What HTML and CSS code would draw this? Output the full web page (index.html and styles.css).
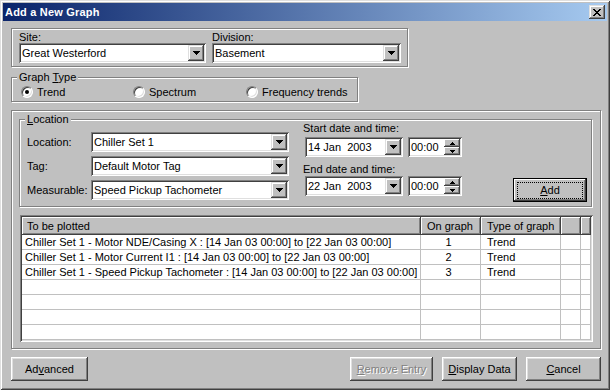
FILE: index.html
```html
<!DOCTYPE html>
<html lang="en">
  <head>
    <meta charset="utf-8" />
    <title>Add a New Graph</title>
    <link rel="stylesheet" href="styles.css">
  </head>

  <body>
    <div class="window">
      <div class="titlebar">
        <span class="title">Add a New Graph</span>
        <span class="close-btn">
          <svg width="8" height="7" viewBox="0 0 8 7"><path d="M0 0h2v1h-2zM6 0h2v1h-2zM1 1h2v1h-2zM5 1h2v1h-2zM2 2h4v1h-4zM3 3h2v1h-2zM2 4h4v1h-4zM1 5h2v1h-2zM5 5h2v1h-2zM0 6h2v1h-2zM6 6h2v1h-2z"/></svg>
        </span>
      </div>

      <div class="dialog">
        <div class="etched site-box">
          <div class="field">
            <span class="label">Site:</span>
            <div class="combo site-combo">
              <span class="combo-text">Great Westerford</span>
              <span class="drop"><svg width="7" height="4" viewBox="0 0 7 4"><path d="M0 0h7v1h-1v1h-1v1h-1v1h-1v-1h-1v-1h-1v-1h-1z"/></svg></span>
            </div>
          </div>
          <div class="field">
            <span class="label">Division:</span>
            <div class="combo division-combo">
              <span class="combo-text">Basement</span>
              <span class="drop"><svg width="7" height="4" viewBox="0 0 7 4"><path d="M0 0h7v1h-1v1h-1v1h-1v1h-1v-1h-1v-1h-1v-1h-1z"/></svg></span>
            </div>
          </div>
        </div>

        <fieldset class="group graph-type">
          <legend>Graph <u>T</u>ype</legend>
          <div class="radio-row">
            <label class="radio-item"><span class="radio checked"></span>Trend</label>
            <label class="radio-item"><span class="radio"></span>Spectrum</label>
            <label class="radio-item"><span class="radio"></span>Frequency trends</label>
          </div>
        </fieldset>

        <div class="etched main-box">
          <fieldset class="group location">
            <legend><u>L</u>ocation</legend>
            <div class="location-body">
              <div class="location-grid">
                <span class="label">Location:</span>
                <div class="combo">
                  <span class="combo-text">Chiller Set 1</span>
                  <span class="drop"><svg width="7" height="4" viewBox="0 0 7 4"><path d="M0 0h7v1h-1v1h-1v1h-1v1h-1v-1h-1v-1h-1v-1h-1z"/></svg></span>
                </div>
                <span class="label">Tag:</span>
                <div class="combo">
                  <span class="combo-text">Default Motor Tag</span>
                  <span class="drop"><svg width="7" height="4" viewBox="0 0 7 4"><path d="M0 0h7v1h-1v1h-1v1h-1v1h-1v-1h-1v-1h-1v-1h-1z"/></svg></span>
                </div>
                <span class="label">Measurable:</span>
                <div class="combo">
                  <span class="combo-text">Speed Pickup Tachometer</span>
                  <span class="drop"><svg width="7" height="4" viewBox="0 0 7 4"><path d="M0 0h7v1h-1v1h-1v1h-1v1h-1v-1h-1v-1h-1v-1h-1z"/></svg></span>
                </div>
              </div>

              <div class="dates">
                <span class="label">Start date and time:</span>
                <div class="date-row start-row">
                  <div class="combo date-combo">
                    <span class="combo-text">14 Jan&nbsp; 2003</span>
                    <span class="drop"><svg width="7" height="4" viewBox="0 0 7 4"><path d="M0 0h7v1h-1v1h-1v1h-1v1h-1v-1h-1v-1h-1v-1h-1z"/></svg></span>
                  </div>
                  <div class="time">
                    <span class="combo-text">00:00</span>
                    <span class="spin">
                      <span class="spin-btn"><svg width="5" height="3" viewBox="0 0 5 3"><path d="M2 0h1v1h1v1h1v1h-5v-1h1v-1h1z"/></svg></span>
                      <span class="spin-btn"><svg width="5" height="3" viewBox="0 0 5 3"><path d="M0 0h5v1h-1v1h-1v1h-1v-1h-1v-1h-1z"/></svg></span>
                    </span>
                  </div>
                </div>
                <span class="label end-label">End date and time:</span>
                <div class="date-row end-row">
                  <div class="combo date-combo">
                    <span class="combo-text">22 Jan&nbsp; 2003</span>
                    <span class="drop"><svg width="7" height="4" viewBox="0 0 7 4"><path d="M0 0h7v1h-1v1h-1v1h-1v1h-1v-1h-1v-1h-1v-1h-1z"/></svg></span>
                  </div>
                  <div class="time">
                    <span class="combo-text">00:00</span>
                    <span class="spin">
                      <span class="spin-btn"><svg width="5" height="3" viewBox="0 0 5 3"><path d="M2 0h1v1h1v1h1v1h-5v-1h1v-1h1z"/></svg></span>
                      <span class="spin-btn"><svg width="5" height="3" viewBox="0 0 5 3"><path d="M0 0h5v1h-1v1h-1v1h-1v-1h-1v-1h-1z"/></svg></span>
                    </span>
                  </div>
                </div>
              </div>

              <button class="btn default add-btn" type="button"><u>A</u>dd</button>
            </div>
          </fieldset>

          <div class="listview">
            <table>
              <colgroup>
                <col class="col-plot"><col class="col-graph"><col class="col-type"><col class="col-extra"><col>
              </colgroup>
              <thead>
                <tr><th>To be plotted</th><th class="pad">On graph</th><th class="pad">Type of graph</th><th></th><th></th></tr>
              </thead>
              <tbody>
                <tr><td>Chiller Set 1 - Motor NDE/Casing X : [14 Jan 03 00:00] to [22 Jan 03 00:00]</td><td class="num">1</td><td class="pad">Trend</td><td></td><td></td></tr>
                <tr><td>Chiller Set 1 - Motor Current I1 : [14 Jan 03 00:00] to [22 Jan 03 00:00]</td><td class="num">2</td><td class="pad">Trend</td><td></td><td></td></tr>
                <tr><td>Chiller Set 1 - Speed Pickup Tachometer : [14 Jan 03 00:00] to [22 Jan 03 00:00]</td><td class="num">3</td><td class="pad">Trend</td><td></td><td></td></tr>
                <tr><td></td><td></td><td></td><td></td><td></td></tr>
                <tr><td></td><td></td><td></td><td></td><td></td></tr>
                <tr><td></td><td></td><td></td><td></td><td></td></tr>
                <tr><td></td><td></td><td></td><td></td><td></td></tr>
              </tbody>
            </table>
          </div>
        </div>

        <div class="actions">
          <button class="btn advanced" type="button">Ad<u>v</u>anced</button>
          <div class="actions-right">
            <button class="btn disabled remove" type="button"><u>R</u>emove Entry</button>
            <button class="btn display" type="button"><u>D</u>isplay Data</button>
            <button class="btn cancel" type="button"><u>C</u>ancel</button>
          </div>
        </div>
      </div>
    </div>
  </body>
</html>
```

FILE: styles.css
```css
* {
  box-sizing: border-box;
}

body {
  margin: 0;
  background: #c0c0c0;
  font-family: "Liberation Sans", Arial, sans-serif;
  font-size: 11px;
  line-height: 12px;
  color: #000;
}

u {
  text-decoration: underline;
  text-underline-offset: 1px;
}

/* window frame */
.window {
  width: 610px;
  height: 390px;
  padding: 3px;
  background: #c0c0c0;
  box-shadow: inset 1px 1px #dfdfdf, inset -1px -1px #404040, inset 2px 2px #fff, inset -2px -2px #808080;
}

.titlebar {
  height: 18px;
  display: flex;
  align-items: center;
  justify-content: space-between;
  padding: 0 2px;
  background: linear-gradient(to right, #0a246a, #a6caf0);
  color: #fff;
}

.title {
  font-weight: bold;
  letter-spacing: 0.2px;
}

.close-btn {
  width: 16px;
  height: 14px;
  display: flex;
  align-items: center;
  justify-content: center;
  background: #c0c0c0;
  box-shadow: inset -1px -1px #404040, inset 1px 1px #dfdfdf, inset -2px -2px #808080, inset 2px 2px #fff;
}

.dialog {
  padding: 7px 6px 0 8px;
}

/* etched frames */
.etched {
  border: 1px solid #808080;
  box-shadow: inset 1px 1px #fff, 1px 1px #fff;
}

.group {
  margin: 0;
  padding: 0;
  min-width: 0;
  border: 1px solid #808080;
  box-shadow: inset 1px 1px #fff, 1px 1px #fff;
}

.group legend {
  margin-left: 5px;
  padding: 0 2px;
  line-height: 12px;
  background: #c0c0c0;
}

.label {
  line-height: 12px;
  white-space: nowrap;
}

/* site / division */
.site-box {
  width: 397px;
  height: 39px;
  display: flex;
  gap: 6px;
  padding: 2px 7px 0;
}

.field {
  display: flex;
  flex-direction: column;
}

.site-combo {
  width: 187px;
}

.division-combo {
  width: 189px;
}

/* combo boxes */
.combo,
.time {
  height: 20px;
  display: flex;
  align-items: center;
  padding: 2px;
  background: #fff;
  box-shadow: inset 1px 1px #808080, inset -1px -1px #fff, inset 2px 2px #404040, inset -2px -2px #dfdfdf;
}

.combo-text {
  flex: 1;
  padding-left: 1px;
  white-space: nowrap;
  overflow: hidden;
}

.drop {
  width: 16px;
  height: 16px;
  display: flex;
  align-items: center;
  justify-content: center;
  background: #c0c0c0;
  box-shadow: inset -1px -1px #404040, inset 1px 1px #dfdfdf, inset -2px -2px #808080, inset 2px 2px #fff;
}

/* graph type */
.graph-type {
  width: 347px;
  height: 31px;
  margin-top: 4px;
}

.radio-row {
  display: grid;
  grid-template-columns: 112px 113px auto;
  padding: 3px 0 0 9px;
}

.radio-item {
  display: flex;
  align-items: center;
  gap: 4px;
  white-space: nowrap;
}

.radio {
  width: 12px;
  height: 12px;
  display: flex;
  align-items: center;
  justify-content: center;
  border-radius: 50%;
  background: #fff;
  border: 1px solid;
  border-color: #808080 #fff #fff #808080;
  box-shadow: inset 1px 1px #404040, inset -1px -1px #dfdfdf;
}

.radio.checked::after {
  content: "";
  width: 4px;
  height: 4px;
  border-radius: 50%;
  background: #000;
}

/* main box */
.main-box {
  width: 590px;
  height: 239px;
  margin-top: 8px;
  padding: 2px 7px 0;
}

.location {
  width: 573px;
  height: 94px;
}

.location-body {
  display: flex;
  align-items: flex-start;
  padding: 7px 0 0 7px;
}

.location-grid {
  display: grid;
  grid-template-columns: 64px 198px;
  grid-auto-rows: 20px;
  row-gap: 4px;
  align-items: center;
}

.dates {
  display: flex;
  flex-direction: column;
  margin: -10px 0 0 14px;
}

.date-row {
  display: flex;
  gap: 5px;
  padding-left: 2px;
}

.start-row {
  margin-top: 3px;
}

.end-label {
  margin-top: 6px;
}

.end-row {
  margin-top: 1px;
}

.date-combo {
  width: 98px;
}

.date-combo .combo-text,
.time .combo-text {
  padding-left: 1px;
}

.time {
  width: 54px;
}

.spin {
  display: flex;
  flex-direction: column;
}

.spin-btn {
  width: 16px;
  height: 8px;
  display: flex;
  align-items: center;
  justify-content: center;
  background: #c0c0c0;
  box-shadow: inset -1px -1px #404040, inset 1px 1px #fff, inset -2px -2px #808080;
}

/* buttons */
.btn {
  margin: 0;
  padding: 0;
  border: none;
  height: 24px;
  font: inherit;
  color: #000;
  background: #c0c0c0;
  box-shadow: inset -1px -1px #404040, inset 1px 1px #fff, inset -2px -2px #808080, inset 2px 2px #dfdfdf;
}

.btn.default {
  position: relative;
  border: 1px solid #000;
  box-shadow: inset -1px -1px #404040, inset 1px 1px #fff, inset -2px -2px #808080;
}

.btn.default::after {
  content: "";
  position: absolute;
  inset: 3px 3px 2px 3px;
  border: 1px dotted #000;
}

.add-btn {
  width: 74px;
  margin: 46px 4px 0 auto;
}

.btn.disabled {
  color: #808080;
  text-shadow: 1px 1px #fff;
}

.actions {
  display: flex;
  margin-top: 8px;
}

.actions-right {
  display: flex;
  gap: 9px;
  margin-left: auto;
}

.advanced {
  width: 77px;
}

.remove {
  width: 83px;
}

.display,
.cancel {
  width: 75px;
}

/* list view */
.listview {
  width: 573px;
  height: 127px;
  margin: 8px 0 0 1px;
  padding: 2px;
  overflow: hidden;
  background: #fff;
  box-shadow: inset 1px 1px #808080, inset -1px -1px #fff, inset 2px 2px #404040, inset -2px -2px #dfdfdf;
}

.listview table {
  width: 569px;
  table-layout: fixed;
  border-collapse: separate;
  border-spacing: 0;
}

.col-plot {
  width: 399px;
}

.col-graph {
  width: 60px;
}

.col-type {
  width: 80px;
}

.col-extra {
  width: 20px;
}

.listview th {
  height: 18px;
  padding: 0 0 0 5px;
  text-align: left;
  font-weight: normal;
  white-space: nowrap;
  background: #c0c0c0;
  box-shadow: inset -1px -1px #404040, inset 1px 1px #fff, inset -2px -2px #808080;
}

.listview th.pad {
  padding-left: 6px;
}

.listview td {
  height: 15px;
  padding: 0 0 0 3px;
  line-height: 14px;
  white-space: nowrap;
  overflow: hidden;
  border-right: 1px solid #c0c0c0;
  border-bottom: 1px solid #c0c0c0;
}

.listview td.pad {
  padding-left: 6px;
}

.listview td.num {
  padding: 0 4px 0 0;
  text-align: center;
}
```
